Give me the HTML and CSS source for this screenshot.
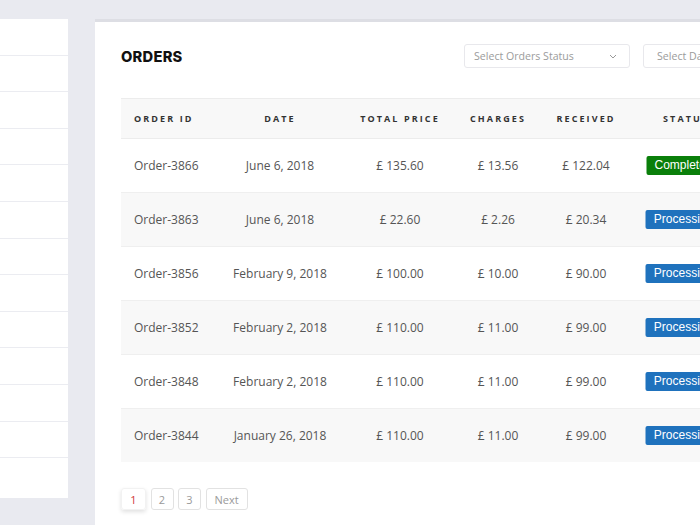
FILE: index.html
```html
<!DOCTYPE html>
<html>
<head>
<meta charset="utf-8">
<link rel="stylesheet" href="styles.css">
</head>
<body>
<div class="layout">
  <aside class="side">
    <div class="side-row"></div><div class="side-row"></div><div class="side-row"></div>
    <div class="side-row"></div><div class="side-row"></div><div class="side-row"></div>
    <div class="side-row"></div><div class="side-row"></div><div class="side-row"></div>
    <div class="side-row"></div><div class="side-row"></div><div class="side-row"></div>
    <div class="side-row last"></div>
  </aside>
  <main class="card">
    <div class="card-head">
      <h2 class="title">ORDERS</h2>
      <div class="filters">
        <div class="select">Select Orders Status
          <svg class="chev" width="8" height="5" viewBox="0 0 8 5"><path d="M1 1l3 3 3-3" fill="none" stroke="#999" stroke-width="1"/></svg>
        </div>
        <div class="select second">Select Date</div>
      </div>
    </div>
    <table class="orders">
      <colgroup>
        <col class="c1"><col class="c2"><col class="c3"><col class="c4"><col class="c5"><col class="c6"><col>
      </colgroup>
      <thead>
        <tr><th class="left">Order ID</th><th>Date</th><th>Total Price</th><th>Charges</th><th>Received</th><th>Status</th><th></th></tr>
      </thead>
      <tbody>
        <tr><td class="left">Order-3866</td><td>June 6, 2018</td><td>£ 135.60</td><td>£ 13.56</td><td>£ 122.04</td><td><span class="badge done">Completed</span></td><td></td></tr>
        <tr><td class="left">Order-3863</td><td>June 6, 2018</td><td>£ 22.60</td><td>£ 2.26</td><td>£ 20.34</td><td><span class="badge proc">Processing</span></td><td></td></tr>
        <tr><td class="left">Order-3856</td><td>February 9, 2018</td><td>£ 100.00</td><td>£ 10.00</td><td>£ 90.00</td><td><span class="badge proc">Processing</span></td><td></td></tr>
        <tr><td class="left">Order-3852</td><td>February 2, 2018</td><td>£ 110.00</td><td>£ 11.00</td><td>£ 99.00</td><td><span class="badge proc">Processing</span></td><td></td></tr>
        <tr><td class="left">Order-3848</td><td>February 2, 2018</td><td>£ 110.00</td><td>£ 11.00</td><td>£ 99.00</td><td><span class="badge proc">Processing</span></td><td></td></tr>
        <tr><td class="left">Order-3844</td><td>January 26, 2018</td><td>£ 110.00</td><td>£ 11.00</td><td>£ 99.00</td><td><span class="badge proc">Processing</span></td><td></td></tr>
      </tbody>
    </table>
    <nav class="pager">
      <span class="page current">1</span>
      <span class="page">2</span>
      <span class="page">3</span>
      <span class="page next">Next</span>
    </nav>
  </main>
</div>
</body>
</html>
```
FILE: styles.css
```css
html, body {
  margin: 0;
  padding: 0;
}
body {
  background: #e9eaf0;
  width: 700px;
  height: 525px;
  overflow: hidden;
  font-family: "Open Sans", "Liberation Sans", sans-serif;
}
.layout {
  display: flex;
  align-items: flex-start;
  gap: 27px;
  padding-top: 19px;
}
.side {
  flex: 0 0 68px;
  height: 479px;
  background: #fff;
  display: flex;
  flex-direction: column;
}
.side-row {
  height: 36.6px;
  box-sizing: border-box;
  border-bottom: 1px solid #ebecf1;
  flex: none;
}
.side-row.last {
  flex: 1;
  border-bottom: 0;
}
.card {
  flex: 0 0 740px;
  box-sizing: border-box;
  background: #fff;
  border-top: 3px solid #dddee4;
  padding: 22px 26px 0;
  min-height: 520px;
}
.card-head {
  display: flex;
  justify-content: space-between;
  align-items: center;
  height: 24px;
}
.title {
  margin: 1px 0 0;
  font-family: "Inter", "DejaVu Sans", sans-serif;
  font-weight: 800;
  font-size: 14.7px;
  letter-spacing: 0.25px;
  color: #111;
}
.filters {
  display: flex;
  gap: 13px;
}
.select {
  width: 166px;
  height: 24px;
  box-sizing: border-box;
  border: 1px solid #e8e8ec;
  border-radius: 3px;
  padding: 0 12px 0 9px;
  display: flex;
  align-items: center;
  justify-content: space-between;
  font-size: 10.6px;
  color: #9b9b9b;
}
.select.second {
  padding-left: 13px;
}
.chev {
  display: block;
}
.orders {
  margin-top: 30px;
  width: 688px;
  table-layout: fixed;
  border-collapse: collapse;
}
.c1 { width: 99px; }
.c2 { width: 120px; }
.c3 { width: 120px; }
.c4 { width: 76px; }
.c5 { width: 100px; }
.c6 { width: 100px; }
.orders th {
  height: 39px;
  background: #f8f8f8;
  border-top: 1px solid #ececec;
  border-bottom: 1px solid #ececec;
  font-size: 9px;
  font-weight: 700;
  letter-spacing: 2.1px;
  text-transform: uppercase;
  color: #333;
  text-align: center;
  padding: 0;
  white-space: nowrap;
}
.orders td {
  height: 53px;
  padding: 0;
  font-size: 12px;
  color: #555;
  text-align: center;
  border-bottom: 1px solid #efefef;
  white-space: nowrap;
}
.orders tbody tr:nth-child(even) td {
  background: #f8f8f8;
}
.orders tbody tr:last-child td {
  border-bottom: 0;
}
.orders .left {
  text-align: left;
  padding-left: 13px;
}
.badge {
  display: inline-block;
  font-family: "Liberation Sans", Arial, sans-serif;
  font-size: 12px;
  line-height: 19px;
  height: 19px;
  padding: 0 10px 0 8px;
  border-radius: 2px;
  color: #fff;
  transform: translateX(-1.5px);
}
.badge.done {
  background: #0a7f0a;
}
.badge.proc {
  background: #1f72bd;
}
.pager {
  display: flex;
  gap: 4.5px;
  margin-top: 26px;
}
.page {
  box-sizing: border-box;
  min-width: 23px;
  height: 22px;
  padding: 0 7px;
  border: 1px solid #e2e2e2;
  border-radius: 3px;
  display: flex;
  align-items: center;
  justify-content: center;
  font-size: 11px;
  color: #9a9a9a;
}
.page.current {
  width: 25px;
  border-color: #f2f2f2;
  color: #d0393a;
  box-shadow: 0 2px 4px rgba(0, 0, 0, 0.12);
}
.page.next {
  padding: 0 8px;
}
```
